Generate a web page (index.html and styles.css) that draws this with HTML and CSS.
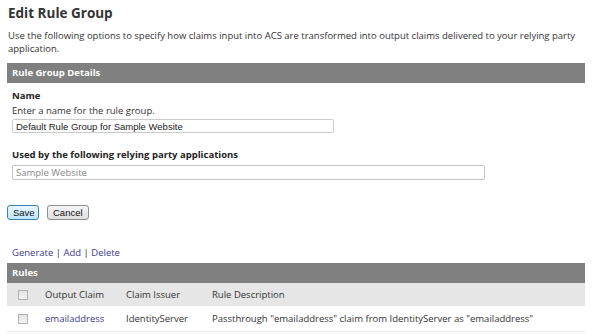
FILE: index.html
```html
<!DOCTYPE html>
<html>
<head>
<meta charset="utf-8">
<link rel="stylesheet" href="styles.css">
</head>
<body>
<div class="page">
  <h1 class="title">Edit Rule Group</h1>
  <p class="intro">Use the following options to specify how claims input into ACS are transformed into output claims delivered to your relying party application.</p>

  <div class="bar">Rule Group Details</div>
  <div class="section">
    <div class="label">Name</div>
    <div class="hint">Enter a name for the rule group.</div>
    <input class="field field-name" type="text" value="Default Rule Group for Sample Website">
    <div class="label label-used">Used by the following relying party applications</div>
    <div class="field field-rp">Sample Website</div>
  </div>

  <div class="buttons">
    <button class="btn btn-save">Save</button>
    <button class="btn">Cancel</button>
  </div>

  <div class="actions"><a href="#">Generate</a> | <a href="#">Add</a> | <a href="#">Delete</a></div>

  <div class="bar">Rules</div>
  <div class="row row-head">
    <span class="cell cell-check"><span class="box"></span></span>
    <span class="cell cell-claim">Output Claim</span>
    <span class="cell cell-issuer">Claim Issuer</span>
    <span class="cell cell-desc">Rule Description</span>
  </div>
  <div class="row row-data">
    <span class="cell cell-check"><span class="box"></span></span>
    <span class="cell cell-claim"><a href="#">emailaddress</a></span>
    <span class="cell cell-issuer">IdentityServer</span>
    <span class="cell cell-desc">Passthrough "emailaddress" claim from IdentityServer as "emailaddress"</span>
  </div>
</div>
</body>
</html>
```

FILE: styles.css
```css
html, body {
  margin: 0;
  padding: 0;
  background: #ffffff;
}
body {
  font-family: "Open Sans", "Noto Sans", sans-serif;
  font-size: 9.5px;
  color: #333333;
}
.page {
  width: 578px;
  padding: 4px 0 0 7px;
}
.title {
  margin: 0 0 0 1px;
  font-size: 13.5px;
  font-weight: bold;
  line-height: 18px;
  color: #333333;
}
.intro {
  margin: 7px 0 0 1px;
  line-height: 13px;
  width: 577px;
}
.bar {
  margin-top: 8px;
  height: 20px;
  line-height: 20px;
  background: #808080;
  color: #ffffff;
  font-weight: bold;
  padding-left: 5px;
}
.section {
  padding: 6px 0 0 5px;
  display: flex;
  flex-direction: column;
  align-items: flex-start;
}
.label {
  font-weight: bold;
  line-height: 13px;
  color: #222222;
}
.hint {
  margin-top: 2px;
  line-height: 13px;
}
.field {
  box-sizing: border-box;
  height: 14px;
  border: 1px solid #cccccc;
  border-radius: 2px;
  margin: 2px 0 0 0;
  padding: 0 3px;
  font-family: "Liberation Sans", Arial, sans-serif;
  font-size: 9.5px;
  line-height: 12px;
  color: #222222;
  background: #ffffff;
  outline: none;
}
.field-name {
  width: 322px;
}
.label-used {
  margin-top: 15px;
}
.field-rp {
  width: 473px;
  height: 15px;
  margin-top: 4px;
  font-family: "Open Sans", "Noto Sans", sans-serif;
  color: #888888;
  line-height: 13px;
  border-color: #c4c4c4;
}
.buttons {
  display: flex;
  gap: 8px;
  margin-top: 25px;
}
.btn {
  box-sizing: border-box;
  height: 15px;
  padding: 0 5px;
  font-family: "Liberation Sans", Arial, sans-serif;
  font-size: 9.5px;
  line-height: 13px;
  color: #111111;
  border: 1px solid #8e8f8f;
  border-radius: 3px;
  background: linear-gradient(#f6f6f6, #dddddd);
}
.btn-save {
  border-color: #3c7fb1;
  background: linear-gradient(#eaf6fd, #bee6fd);
  width: 32px;
}
.actions {
  margin: 26px 0 0 5px;
  line-height: 13px;
  color: #333333;
}
a {
  color: #3b3b8f;
  text-decoration: none;
}
.actions + .bar {
  margin-top: 4px;
}
.row {
  display: flex;
  align-items: center;
}
.row-head {
  height: 23px;
  background: #e6e6e6;
}
.row-data {
  height: 25px;
  border-bottom: 1px solid #ececec;
}
.cell-check {
  width: 38px;
  display: flex;
  padding-left: 11px;
  box-sizing: border-box;
}
.box {
  width: 8px;
  height: 8px;
  border: 1px solid #b0b0b0;
  background: linear-gradient(#e4e4e4, #f4f4f4);
}
.cell-claim {
  width: 81px;
}
.cell-issuer {
  width: 86px;
}
```
